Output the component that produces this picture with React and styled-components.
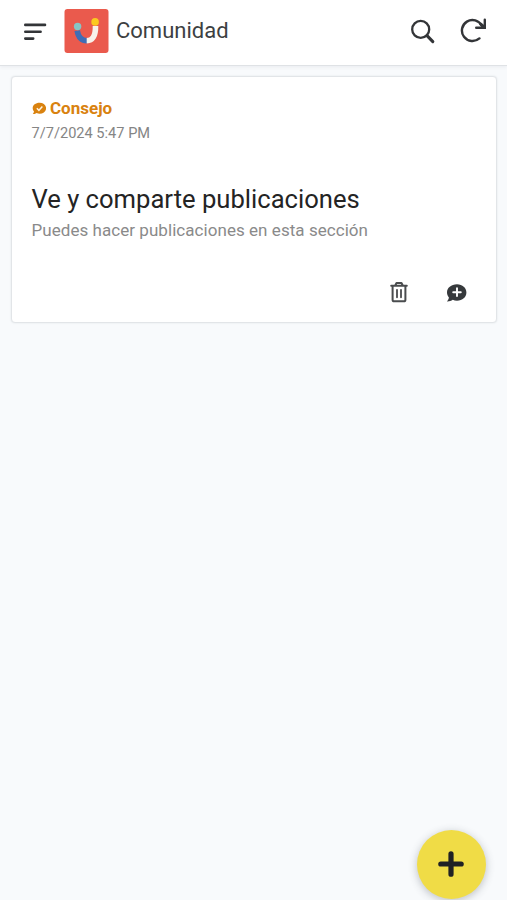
import React from "react";
import styled, { createGlobalStyle } from "styled-components";

const GlobalStyle = createGlobalStyle`
  * {
    box-sizing: border-box;
    margin: 0;
    padding: 0;
  }

  body {
    background-color: #f8fafc;
    font-family: Roboto, "Liberation Sans", sans-serif;
  }

  svg {
    display: block;
    flex-shrink: 0;
  }
`;

const Page = styled.div`
  min-height: 100vh;
  background-color: #f8fafc;
`;

const Header = styled.header`
  height: 66px;
  padding: 0 20px 4px 23px;
  display: flex;
  align-items: center;
  background-color: white;
  border-bottom: 1px solid #dfe2e5;
  box-shadow: 0 1px 4px rgba(60, 70, 90, 0.08);
`;

const IconButton = styled.button`
  border: none;
  background: transparent;
  color: ${(props) => props.color || "#333538"};
  cursor: pointer;
`;

const Logo = styled.svg`
  margin-left: 17px;
`;

const Title = styled.h1`
  flex: 1;
  margin-left: 7px;
  color: #3d3f42;
  font-size: 22px;
  line-height: 30px;
  font-weight: 400;
  white-space: nowrap;
`;

const HeaderActions = styled.div`
  display: flex;
  align-items: center;
  gap: 24px;
`;

const Feed = styled.main`
  padding: 10px 10px 0 11px;
`;

const Card = styled.article`
  height: 247px;
  padding: 21px 29px 19px 19.5px;
  display: flex;
  flex-direction: column;
  background-color: white;
  border: 1px solid #e2e5e8;
  border-radius: 4px;
  box-shadow: 0 0 2px rgba(60, 70, 90, 0.12);
`;

const Category = styled.div`
  display: flex;
  align-items: center;
  gap: 4px;
  color: #d9820f;
  font-size: 17px;
  line-height: 20px;
  font-weight: 700;
`;

const PostDate = styled.time`
  margin-top: 6px;
  color: #858585;
  font-size: 14.6px;
  line-height: 18px;
`;

const PostTitle = styled.h2`
  margin-top: 41px;
  color: #242424;
  font-size: 25.6px;
  line-height: 32px;
  font-weight: 400;
  white-space: nowrap;
`;

const PostText = styled.p`
  margin-top: 5px;
  color: #8a8a8a;
  font-size: 17px;
  line-height: 20px;
  letter-spacing: 0.05px;
  white-space: nowrap;
`;

const CardActions = styled.div`
  display: flex;
  justify-content: flex-end;
  align-items: center;
  gap: 37px;
  margin-top: auto;
`;

const AddButton = styled.button`
  position: fixed;
  right: 21.5px;
  bottom: 1.5px;
  width: 69px;
  height: 69px;
  display: flex;
  align-items: center;
  justify-content: center;
  border: none;
  border-radius: 50%;
  background-color: #f0dc46;
  color: #202124;
  box-shadow: 0 2px 9px rgba(50, 55, 65, 0.3);
  cursor: pointer;
`;

const MenuIcon = () => (
  <svg width="24" height="20" viewBox="0 0 24 20" fill="none" stroke="currentColor" strokeWidth="2.6" strokeLinecap="round">
    <path d="M2.3 3.9H22M2.3 10.8H17.6M2.3 17.6H10.2" />
  </svg>
);

const BrandLogo = () => (
  <Logo width="45" height="44" viewBox="0 0 45 44">
    <rect x="0.5" width="44" height="44" rx="3" fill="#ea5a4d" />
    <path d="M13.2 21.6C14.3 28.5 18 31.7 23.2 31.7" fill="none" stroke="#3f6db5" strokeWidth="5.6" />
    <path d="M22.7 31.7C28.5 31.7 31.7 27 31.5 17" fill="none" stroke="#f8f1e9" strokeWidth="5.6" />
    <circle cx="13.6" cy="17.5" r="3.7" fill="#86c5c5" />
    <circle cx="31.1" cy="12.9" r="3.8" fill="#fbc91f" />
  </Logo>
);

const SearchIcon = () => (
  <svg width="26" height="26" viewBox="0 0 26 26" fill="none" stroke="currentColor" strokeLinecap="round">
    <circle cx="10.7" cy="11.4" r="8.5" strokeWidth="2.3" />
    <path d="M17 17.7L22.8 23.6" strokeWidth="3.1" />
  </svg>
);

const RefreshIcon = () => (
  <svg width="27" height="26" viewBox="0 0 27 26" fill="none" stroke="currentColor" strokeWidth="2.4" strokeLinecap="round">
    <path d="M19.4 20.4A10.5 10.5 0 1 1 21.8 7.8" />
    <path d="M24.8 1.7V9.8H16.2" />
    <path d="M24.2 9.2L20.8 6.2" strokeWidth="3" />
  </svg>
);

const BUBBLE = "M11 1.2C16.5 1.2 20.4 4.6 20.4 9S16.5 16.8 11 16.8C9.4 16.8 8 16.5 6.8 15.9C5.1 17.1 3.1 17.6 1 17.5C2 16.4 2.8 15 2.9 13.7C1.6 12.3 1 10.7 1 9C1 4.6 5.2 1.2 11 1.2Z";

const TipIcon = () => (
  <svg width="14.5" height="12.5" viewBox="0 0 21 18" preserveAspectRatio="none">
    <path d={BUBBLE} fill="currentColor" />
    <path d="M7 9L10 12L15 6.5" fill="none" stroke="#fff3df" strokeWidth="2.1" />
  </svg>
);

const CommentIcon = () => (
  <svg width="21" height="19" viewBox="0 0 21 18" preserveAspectRatio="none">
    <path d={BUBBLE} fill="currentColor" />
    <path d="M11 5V12.4M7.2 8.7H14.8" fill="none" stroke="white" strokeWidth="1.9" strokeLinecap="round" />
  </svg>
);

const TrashIcon = () => (
  <svg width="20" height="22" viewBox="0 0 20 22" fill="none" stroke="currentColor" strokeWidth="2" strokeLinecap="round" strokeLinejoin="round">
    <path d="M2.2 4.8H17.8M6.2 4.5L7.5 2H12.5L13.8 4.5" />
    <path d="M3.6 5V18.7Q3.6 20.3 5.2 20.3H14.8Q16.4 20.3 16.4 18.7V5" />
    <path d="M8 8.8V16.3M12 8.8V16.3" strokeWidth="1.8" />
  </svg>
);

const PlusIcon = () => (
  <svg width="26" height="26" viewBox="0 0 26 26" fill="none" stroke="currentColor" strokeWidth="5.2" strokeLinecap="round">
    <path d="M13 2.8V23.2M2.8 13H23.2" />
  </svg>
);

const posts = [
  {
    id: 1,
    category: "Consejo",
    date: "7/7/2024 5:47 PM",
    title: "Ve y comparte publicaciones",
    text: "Puedes hacer publicaciones en esta sección",
  },
];

const Post = ({ post }) => (
  <Card>
    <Category>
      <TipIcon />
      {post.category}
    </Category>
    <PostDate>{post.date}</PostDate>
    <PostTitle>{post.title}</PostTitle>
    <PostText>{post.text}</PostText>
    <CardActions>
      <IconButton color="#4a4c4e">
        <TrashIcon />
      </IconButton>
      <IconButton color="#36393c">
        <CommentIcon />
      </IconButton>
    </CardActions>
  </Card>
);

const App = () => {
  return (
    <Page>
      <GlobalStyle />
      <Header>
        <IconButton>
          <MenuIcon />
        </IconButton>
        <BrandLogo />
        <Title>Comunidad</Title>
        <HeaderActions>
          <IconButton>
            <SearchIcon />
          </IconButton>
          <IconButton>
            <RefreshIcon />
          </IconButton>
        </HeaderActions>
      </Header>
      <Feed>
        {posts.map((post) => (
          <Post key={post.id} post={post} />
        ))}
      </Feed>
      <AddButton>
        <PlusIcon />
      </AddButton>
    </Page>
  );
};

export default App;
